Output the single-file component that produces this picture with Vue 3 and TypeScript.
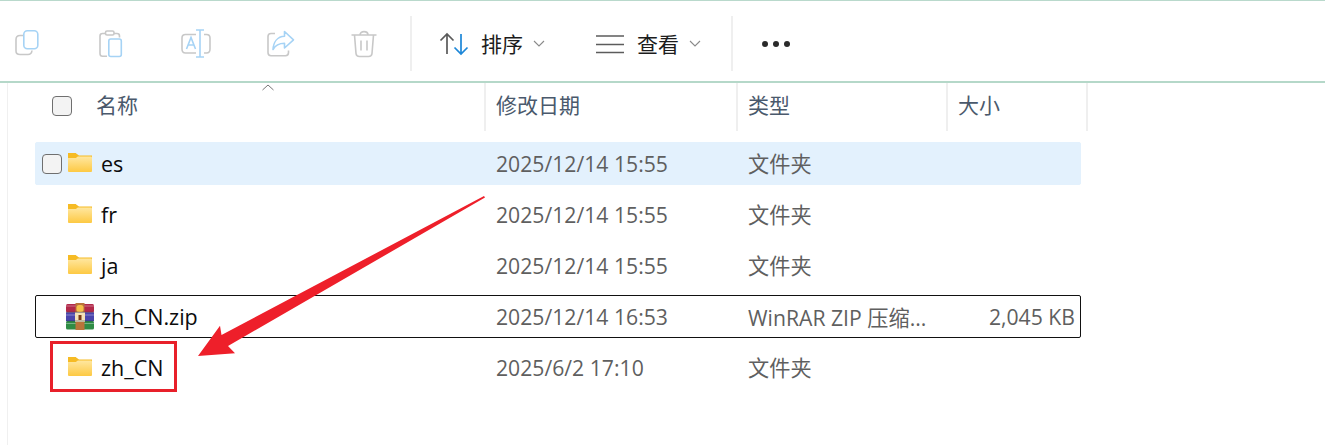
<script setup lang="ts">
interface FileRow {
  name: string
  date: string
  type: string
  size: string
  kind: 'folder' | 'rar'
  state: '' | 'hover' | 'focus'
}
const rows: FileRow[] = [
  { name: 'es', date: '2025/12/14 15:55', type: '文件夹', size: '', kind: 'folder', state: 'hover' },
  { name: 'fr', date: '2025/12/14 15:55', type: '文件夹', size: '', kind: 'folder', state: '' },
  { name: 'ja', date: '2025/12/14 15:55', type: '文件夹', size: '', kind: 'folder', state: '' },
  { name: 'zh_CN.zip', date: '2025/12/14 16:53', type: 'WinRAR ZIP 压缩...', size: '2,045 KB', kind: 'rar', state: 'focus' },
  { name: 'zh_CN', date: '2025/6/2 17:10', type: '文件夹', size: '', kind: 'folder', state: '' },
]
</script>

<template>
  <div class="page">
    <header class="toolbar">
      <div class="tool">
        <svg width="30" height="30" viewBox="0 0 30 30" fill="none" stroke-width="1.6">
          <path d="M10.5 6.500 H7 Q3 6.500 3 10.500 V22 Q3 25.500 7 25.500 H15 Q18.500 25.500 19 21.500" stroke="#c8c8c8" />
          <rect x="10.800" y="1.800" width="14" height="18" rx="3.500" stroke="#a6d3f5" />
        </svg>
      </div>
      <div class="tool">
        <svg width="30" height="30" viewBox="0 0 30 30" fill="none" stroke-width="1.6">
          <path d="M9 4.500 H5.500 Q3 4.500 3 7 V24.500 Q3 27.200 5.500 27.200 H10" stroke="#c8c8c8" />
          <path d="M17 4.500 H20 Q22.500 4.500 22.500 7 V8.500" stroke="#c8c8c8" />
          <rect x="8.500" y="2" width="8.500" height="4" rx="1.500" stroke="#c8c8c8" />
          <rect x="11.800" y="10" width="12.500" height="17.500" rx="2" stroke="#a6d3f5" />
        </svg>
      </div>
      <div class="tool">
        <svg width="30" height="30" viewBox="0 0 30 30" fill="none" stroke-width="1.6">
          <path d="M15 5.500 H4.500 Q1 5.500 1 9 V20 Q1 24 4.500 24 H15" stroke="#c8c8c8" />
          <path d="M23 5.500 H25.500 Q29 5.500 29 9 V20 Q29 24 25.500 24 H23" stroke="#c8c8c8" />
          <path d="M15 1 H23 M19 1 V28 M15 28 H23" stroke="#a6d3f5" />
          <path d="M5.500 20 L10 8.500 L14.500 20 M7.200 16 H12.800" stroke="#a6d3f5" />
        </svg>
      </div>
      <div class="tool">
        <svg width="30" height="30" viewBox="0 0 30 30" fill="none" stroke-width="1.6">
          <path d="M10 4.500 H6 Q3 4.500 3 7.500 V23.500 Q3 26.700 6 26.700 H20.500 Q23.500 26.700 23.500 23.500 V21.500" stroke="#c8c8c8" />
          <path d="M19.500 2.500 L28.500 10.800 L19.500 19 V14.300 C14 14.300 10.500 16 8 20.500 C8.500 13 12.500 7.500 19.500 7.300 Z" stroke="#a6d3f5" stroke-linejoin="round" />
        </svg>
      </div>
      <div class="tool">
        <svg width="30" height="30" viewBox="0 0 30 30" fill="none" stroke="#c8c8c8" stroke-width="1.6">
          <path d="M2.500 6 H27.500 M11 6 C11 1.500 19 1.500 19 6" />
          <path d="M5.500 6 L7 24.500 Q7.300 27.500 10.500 27.500 H19.500 Q22.700 27.500 23 24.500 L24.500 6" />
          <path d="M12 11.500 V21.500 M18 11.500 V21.500" />
        </svg>
      </div>
      <div class="sep first-sep"></div>
      <div class="menu sort-menu">
        <svg width="30" height="24" viewBox="0 0 30 24" fill="none" stroke-width="1.700">
          <path d="M8 22 V2 M1.500 8.500 L8 2 L14.500 8.500" stroke="#5a5a5a" />
          <path d="M22 2 V22 M15.500 15.500 L22 22 L28.500 15.500" stroke="#1d87d8" />
        </svg>
        <span class="menu-label">排序</span>
        <svg class="chev" width="12" height="7" viewBox="0 0 12 7" fill="none" stroke="#8a8a8a" stroke-width="1.100"><path d="M1 1 L6 6 L11 1" /></svg>
      </div>
      <div class="menu view-menu">
        <svg width="30" height="20" viewBox="0 0 30 20" fill="none" stroke="#5c5c5c" stroke-width="1.700"><path d="M1 2 H29 M1 10.500 H29 M1 18.500 H29" /></svg>
        <span class="menu-label">查看</span>
        <svg class="chev" width="12" height="7" viewBox="0 0 12 7" fill="none" stroke="#8a8a8a" stroke-width="1.100"><path d="M1 1 L6 6 L11 1" /></svg>
      </div>
      <div class="sep second-sep"></div>
      <div class="dots"><i></i><i></i><i></i></div>
    </header>

    <main class="content">
      <div class="head">
        <div class="hcell name-head">
          <span class="check"></span>
          <span>名称</span>
          <svg class="caret" width="14" height="7" viewBox="0 0 14 7" fill="none" stroke="#777" stroke-width="1"><path d="M1.500 6 L7 1 L12.500 6" /></svg>
        </div>
        <div class="hcell">修改日期</div>
        <div class="hcell">类型</div>
        <div class="hcell">大小</div>
      </div>

      <div class="list">
        <div v-for="r in rows" :key="r.name" class="row" :class="r.state">
          <div class="name-cell">
            <span class="check-slot"><span v-if="r.state === 'hover'" class="check"></span></span>
            <svg v-if="r.kind === 'folder'" class="file-icon" width="26" height="21" viewBox="0 0 26 21">
              <defs>
                <linearGradient id="fold" x1="0" y1="0" x2="0" y2="1">
                  <stop offset="0" stop-color="#ffe7a0" />
                  <stop offset="1" stop-color="#fdc943" />
                </linearGradient>
              </defs>
              <path d="M1 1 H8.500 L12 3.500 H25 V8 H1 Z" fill="#f6bb24" />
              <rect x="1" y="4.500" width="24" height="15.500" rx="1" fill="url(#fold)" />
              <path d="M1 1 H8.500 L11 4 L9 6 H1 Z" fill="#f6bb24" />
            </svg>
            <svg v-else class="file-icon" width="28" height="27" viewBox="0 0 28 27">
              <rect x="0" y="1" width="28" height="8.500" rx="1.500" fill="#b2294a" />
              <rect x="0" y="9.500" width="28" height="8.500" fill="#4a45ad" />
              <rect x="0" y="18" width="28" height="8.500" rx="1.500" fill="#2f8c45" />
              <path d="M0 3 H28 M0 12 H28 M0 20.500 H28" stroke="#ffffff" stroke-opacity=".35" stroke-width="1" />
              <rect x="9.500" y="0" width="9" height="27" fill="#b9743a" />
              <rect x="10.500" y="2" width="7" height="7" rx="2.500" fill="#f6c04a" />
              <rect x="9" y="9" width="10" height="10" fill="#f4e2b8" />
              <rect x="12.500" y="12" width="3" height="5" fill="#7a3a18" />
              <rect x="0" y="8.800" width="28" height="1" fill="#2c2c50" fill-opacity=".5" />
              <rect x="0" y="17.500" width="28" height="1" fill="#1f3350" fill-opacity=".5" />
            </svg>
            <span class="file-name">{{ r.name }}</span>
          </div>
          <div class="cell">{{ r.date }}</div>
          <div class="cell" :class="{ cjk: r.kind === 'folder' }">{{ r.type }}</div>
          <div class="cell size">{{ r.size }}</div>
        </div>
      </div>
    </main>

    <div class="mark"></div>
    <svg class="arrow" width="500" height="200" viewBox="0 190 500 200">
      <path d="M484 196 L485 197.500 L228 346 L235 353.300 L198 356 L220 325.700 L221.500 335 Z" fill="#ee1f2a" />
    </svg>
  </div>
</template>

<style>
html, body { margin: 0; background: #fff; overflow: hidden; }
</style>

<style scoped>
.page {
  position: relative;
  width: 1325px;
  height: 445px;
  overflow: hidden;
  background: #fff;
  font-family: "Open Sans", "Noto Sans CJK SC", sans-serif;
  font-size: 21px;
}
.toolbar {
  box-sizing: border-box;
  height: 83px;
  display: flex;
  align-items: center;
  padding: 5px 0 0 13px;
  gap: 54px;
  border-top: 1px solid #b9d9cc;
  border-bottom: 2px solid #b5d8c9;
}
.tool { width: 30px; height: 30px; display: flex; }
.sep { width: 2px; height: 55px; background: #efefef; }
.first-sep { margin-left: -23px; }
.menu { display: flex; align-items: center; color: #1c1c1c; }
.sort-menu { margin-left: -27px; }
.view-menu { margin-left: -4px; }
.menu-label { margin: 0 0 2px 12px; font-family: "Noto Sans CJK SC", sans-serif; line-height: 28px; }
.chev { margin-left: 10px; }
.second-sep { margin-left: -24px; }
.dots { margin-left: -25px; display: flex; gap: 5px; }
.dots i { width: 6px; height: 6px; border-radius: 50%; background: #2a2a2a; }
.content { margin-left: 7px; border-left: 1px solid #f0f0f0; height: 362px; }
.head {
  height: 48px;
  width: 1080px;
  display: grid;
  grid-template-columns: 478px 252px 210px 140px;
}
.hcell {
  box-sizing: border-box;
  padding: 0 0 7px 10px;
  display: flex;
  align-items: center;
  border-right: 2px solid #efefef;
  color: #4a596c;
  font-family: "Noto Sans CJK SC", sans-serif;
}
.name-head { position: relative; padding-left: 44px; gap: 24px; }
.name-head .check { margin-top: 4px; }
.caret { position: absolute; left: 253px; top: 1px; }
.check {
  display: block;
  box-sizing: border-box;
  width: 20px;
  height: 20px;
  border: 1px solid #6f6f6f;
  border-radius: 4px;
  background: #f3f3f3;
}
.list { margin: 11px 0 0 27px; display: flex; flex-direction: column; gap: 8px; width: 1046px; }
.row {
  box-sizing: border-box;
  height: 43px;
  display: grid;
  grid-template-columns: 451px 252px 210px 133px;
  align-items: center;
  border-radius: 2px;
  border: 1px solid transparent;
}
.row.hover { background: #e3f1fd; border-color: #e3f1fd; }
.row.focus { border-color: #111; }
.name-cell { display: flex; align-items: center; position: relative; }
.check-slot { width: 31px; height: 20px; padding-left: 6px; box-sizing: border-box; flex: none; }
.file-icon { flex: none; margin-right: 8px; margin-top: -3px; }
.row.focus .file-icon { margin-right: 7px; margin-left: -1px; margin-top: 0; }
.file-name { color: #0c0c0c; font-size: 21.500px; }
.cell { padding-left: 9px; color: #5f5f5f; white-space: nowrap; font-size: 21.200px; }
.cell.cjk { padding-bottom: 2px; }
.cell.size { padding-left: 0; padding-right: 7px; text-align: right; }
.mark {
  position: absolute;
  left: 50px;
  top: 341px;
  width: 127px;
  height: 51px;
  box-sizing: border-box;
  border: 3px solid #e8202a;
}
.arrow { position: absolute; left: 0; top: 190px; }
</style>
